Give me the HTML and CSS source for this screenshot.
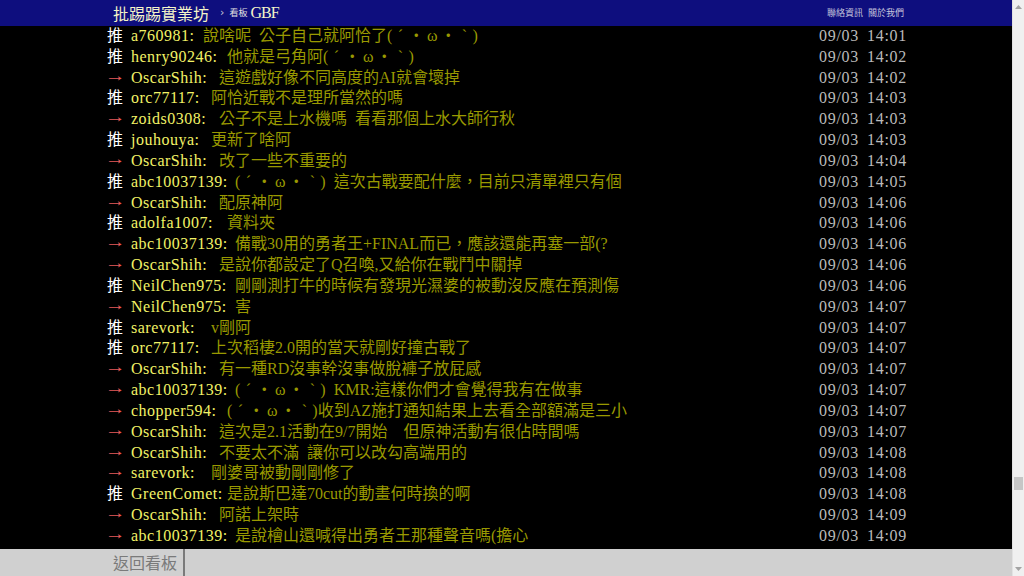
FILE: index.html
```html
<!DOCTYPE html>
<html lang="zh-Hant">
<head>
<meta charset="utf-8">
<title>GBF - 批踢踢實業坊</title>
<link rel="stylesheet" href="styles.css">
</head>
<body>
<div class="window">
  <div class="main">
    <header class="topbar">
      <div class="bar-inner">
        <a class="logo">批踢踢實業坊</a>
        <span class="crumb">›</span>
        <span class="board-label">看板</span>
        <a class="board">GBF</a>
        <nav class="links"><a>聯絡資訊</a><a>關於我們</a></nav>
      </div>
    </header>

    <main class="content">
      <div class="screen">
        <div class="push"><span class="tag up">推</span><span class="uid n7">a760981:</span><span class="msg">說啥呢 公子自己就阿恰了(<i class="fw">´</i>・<i class="fw">ω</i>・<i class="fw">`</i>)</span><span class="t"><span>09/03</span><span>14:01</span></span></div>
        <div class="push"><span class="tag up">推</span><span class="uid n10">henry90246:</span><span class="msg">他就是弓角阿(<i class="fw">´</i>・<i class="fw">ω</i>・<i class="fw">`</i>)</span><span class="t"><span>09/03</span><span>14:02</span></span></div>
        <div class="push"><span class="tag"><i class="arw">→</i></span><span class="uid n9">OscarShih:</span><span class="msg">這遊戲好像不同高度的AI就會壞掉</span><span class="t"><span>09/03</span><span>14:02</span></span></div>
        <div class="push"><span class="tag up">推</span><span class="uid n8">orc77117:</span><span class="msg">阿恰近戰不是理所當然的嗎</span><span class="t"><span>09/03</span><span>14:03</span></span></div>
        <div class="push"><span class="tag"><i class="arw">→</i></span><span class="uid n9">zoids0308:</span><span class="msg">公子不是上水機嗎 看看那個上水大師行秋</span><span class="t"><span>09/03</span><span>14:03</span></span></div>
        <div class="push"><span class="tag up">推</span><span class="uid n8">jouhouya:</span><span class="msg">更新了啥阿</span><span class="t"><span>09/03</span><span>14:03</span></span></div>
        <div class="push"><span class="tag"><i class="arw">→</i></span><span class="uid n9">OscarShih:</span><span class="msg">改了一些不重要的</span><span class="t"><span>09/03</span><span>14:04</span></span></div>
        <div class="push"><span class="tag up">推</span><span class="uid n11">abc10037139:</span><span class="msg">(<i class="fw">´</i>・<i class="fw">ω</i>・<i class="fw">`</i>) 這次古戰要配什麼，目前只清單裡只有個</span><span class="t"><span>09/03</span><span>14:05</span></span></div>
        <div class="push"><span class="tag"><i class="arw">→</i></span><span class="uid n9">OscarShih:</span><span class="msg">配原神阿</span><span class="t"><span>09/03</span><span>14:06</span></span></div>
        <div class="push"><span class="tag up">推</span><span class="uid n10">adolfa1007:</span><span class="msg">資料夾</span><span class="t"><span>09/03</span><span>14:06</span></span></div>
        <div class="push"><span class="tag"><i class="arw">→</i></span><span class="uid n11">abc10037139:</span><span class="msg">備戰30用的勇者王+FINAL而已，應該還能再塞一部(?</span><span class="t"><span>09/03</span><span>14:06</span></span></div>
        <div class="push"><span class="tag"><i class="arw">→</i></span><span class="uid n9">OscarShih:</span><span class="msg">是說你都設定了Q召喚,又給你在戰鬥中關掉</span><span class="t"><span>09/03</span><span>14:06</span></span></div>
        <div class="push"><span class="tag up">推</span><span class="uid n11">NeilChen975:</span><span class="msg">剛剛測打牛的時候有發現光濕婆的被動沒反應在預測傷</span><span class="t"><span>09/03</span><span>14:06</span></span></div>
        <div class="push"><span class="tag"><i class="arw">→</i></span><span class="uid n11">NeilChen975:</span><span class="msg">害</span><span class="t"><span>09/03</span><span>14:07</span></span></div>
        <div class="push"><span class="tag up">推</span><span class="uid n8">sarevork:</span><span class="msg">v剛阿</span><span class="t"><span>09/03</span><span>14:07</span></span></div>
        <div class="push"><span class="tag up">推</span><span class="uid n8">orc77117:</span><span class="msg">上次稻棲2.0開的當天就剛好撞古戰了</span><span class="t"><span>09/03</span><span>14:07</span></span></div>
        <div class="push"><span class="tag"><i class="arw">→</i></span><span class="uid n9">OscarShih:</span><span class="msg">有一種RD沒事幹沒事做脫褲子放屁感</span><span class="t"><span>09/03</span><span>14:07</span></span></div>
        <div class="push"><span class="tag"><i class="arw">→</i></span><span class="uid n11">abc10037139:</span><span class="msg">(<i class="fw">´</i>・<i class="fw">ω</i>・<i class="fw">`</i>) KMR:這樣你們才會覺得我有在做事</span><span class="t"><span>09/03</span><span>14:07</span></span></div>
        <div class="push"><span class="tag"><i class="arw">→</i></span><span class="uid n10">chopper594:</span><span class="msg">(<i class="fw">´</i>・<i class="fw">ω</i>・<i class="fw">`</i>)收到AZ施打通知結果上去看全部額滿是三小</span><span class="t"><span>09/03</span><span>14:07</span></span></div>
        <div class="push"><span class="tag"><i class="arw">→</i></span><span class="uid n9">OscarShih:</span><span class="msg">這次是2.1活動在9/7開始  但原神活動有很佔時間嗎</span><span class="t"><span>09/03</span><span>14:07</span></span></div>
        <div class="push"><span class="tag"><i class="arw">→</i></span><span class="uid n9">OscarShih:</span><span class="msg">不要太不滿 讓你可以改勾高端用的</span><span class="t"><span>09/03</span><span>14:08</span></span></div>
        <div class="push"><span class="tag"><i class="arw">→</i></span><span class="uid n8">sarevork:</span><span class="msg">剛婆哥被動剛剛修了</span><span class="t"><span>09/03</span><span>14:08</span></span></div>
        <div class="push"><span class="tag up">推</span><span class="uid n10">GreenComet:</span><span class="msg">是說斯巴達70cut的動畫何時換的啊</span><span class="t"><span>09/03</span><span>14:08</span></span></div>
        <div class="push"><span class="tag"><i class="arw">→</i></span><span class="uid n9">OscarShih:</span><span class="msg">阿諾上架時</span><span class="t"><span>09/03</span><span>14:09</span></span></div>
        <div class="push"><span class="tag"><i class="arw">→</i></span><span class="uid n11">abc10037139:</span><span class="msg">是說檜山還喊得出勇者王那種聲音嗎(擔心</span><span class="t"><span>09/03</span><span>14:09</span></span></div>
      </div>
    </main>

    <footer class="navbar">
      <div class="bar-inner">
        <a class="nav-btn">返回看板</a>
      </div>
    </footer>
  </div>

  <div class="scrollbar">
    <div class="sb-btn">
      <svg width="7" height="4" viewBox="0 0 7 4"><path d="M0 4 L3.5 0 L7 4 Z" fill="#a3a3a3"/></svg>
    </div>
    <div class="sb-gap"></div>
    <div class="sb-thumb"></div>
    <div class="sb-rest"></div>
    <div class="sb-btn">
      <svg width="7" height="4" viewBox="0 0 7 4"><path d="M0 0 L7 0 L3.5 4 Z" fill="#a3a3a3"/></svg>
    </div>
  </div>
</div>
</body>
</html>
```
FILE: styles.css
```css
html, body {
  margin: 0;
  padding: 0;
  height: 100%;
  overflow: hidden;
  background: #000;
}

.window {
  display: flex;
  width: 1024px;
  height: 576px;
}

.main {
  width: 1012px;
  flex: none;
  display: flex;
  flex-direction: column;
  background: #000;
}

.bar-inner {
  width: 800px;
  margin: 0 auto;
  padding-left: 2px;
  display: flex;
  align-items: center;
  height: 100%;
}

/* top bar */
.topbar {
  height: 26px;
  flex: none;
  background: #0e0e7e;
}
.topbar .bar-inner {
  padding-left: 8px;
  width: 794px;
}
.logo {
  font-family: "Noto Sans CJK TC", sans-serif;
  font-size: 16px;
  color: #f4f4c8;
  line-height: 26px;
}
.crumb {
  font-family: "DejaVu Sans", sans-serif;
  font-size: 11px;
  color: #c8c8d8;
  margin-left: 11px;
  line-height: 26px;
}
.board-label {
  font-family: "Noto Sans CJK TC", sans-serif;
  font-size: 9px;
  color: #e0e0e0;
  margin-left: 5px;
  line-height: 26px;
}
.board {
  font-family: "Liberation Serif", serif;
  font-size: 16px;
  letter-spacing: -1px;
  color: #f4f4c8;
  margin-left: 3px;
  line-height: 26px;
}
.links {
  margin-left: auto;
  display: flex;
  gap: 5px;
  padding-right: 3px;
}
.links a {
  font-family: "Noto Sans CJK TC", sans-serif;
  font-size: 9px;
  color: #c4c4dc;
  line-height: 26px;
}

/* content */
.content {
  flex: 1;
  overflow: hidden;
  background: #000;
}
.screen {
  width: 800px;
  margin: 0 auto;
  padding-left: 2px;
  font-family: "Liberation Serif", "Noto Sans CJK TC", serif;
  font-size: 16px;
  color: #bbb;
}
.push {
  display: flex;
  height: 20.83px;
  line-height: 20.83px;
  white-space: pre;
}
.tag {
  flex: none;
  width: 24px;
  font-family: "Liberation Serif", "Noto Sans CJK TC", sans-serif;
}
.tag.up { color: #fff; }
.arw {
  font-style: normal;
  display: inline-block;
  color: #e65c5c;
  transform: translate(-2px, -2px) scaleX(1.3);
  transform-origin: 0 50%;
}
.uid {
  flex: none;
  color: #f2f266;
  letter-spacing: 0.5px;
}
.n7 { width: 72px; }
.n8 { width: 80px; }
.n9 { width: 88px; }
.n10 { width: 96px; }
.n11 { width: 104px; }
.msg {
  flex: 1;
  min-width: 0;
  overflow: hidden;
  color: #999900;
  word-spacing: 4px;
}
.fw {
  font-style: normal;
  display: inline-block;
  width: 16px;
  text-align: center;
}
.t {
  flex: none;
  width: 88px;
  display: flex;
  justify-content: space-between;
  color: #bbb;
}
.t span {
  width: 40px;
  text-align: left;
  letter-spacing: 0.7px;
}

/* bottom bar */
.navbar {
  height: 27px;
  flex: none;
  background: #d0d0d0;
}
.nav-btn {
  font-family: "Noto Sans CJK TC", sans-serif;
  font-size: 16px;
  color: #7a7a7a;
  padding: 0 6px 0 6px;
  height: 27px;
  line-height: 27px;
  border-right: 2px solid #7a7a7a;
}

/* fake scrollbar */
.scrollbar {
  width: 11px;
  flex: none;
  background: #f0f0f0;
  border-left: 1px solid #e2e2e2;
  display: flex;
  flex-direction: column;
}
.sb-btn {
  height: 14px;
  display: flex;
  align-items: center;
  justify-content: center;
  flex: none;
}
.sb-gap {
  height: 463px;
  flex: none;
}
.sb-thumb {
  height: 13px;
  margin: 0 1px;
  background: #c6c6c6;
  flex: none;
}
.sb-rest {
  flex: 1;
}
```
